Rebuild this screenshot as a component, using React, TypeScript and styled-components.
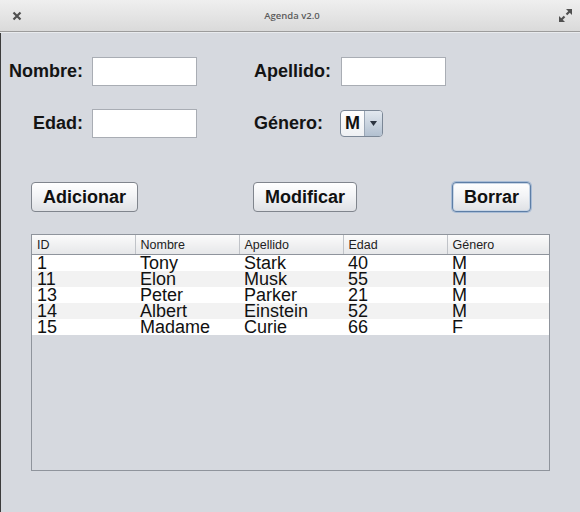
import styled, { createGlobalStyle } from "styled-components";

type Person = {
  id: number;
  nombre: string;
  apellido: string;
  edad: number;
  genero: string;
};

const people: Person[] = [
  { id: 1, nombre: "Tony", apellido: "Stark", edad: 40, genero: "M" },
  { id: 11, nombre: "Elon", apellido: "Musk", edad: 55, genero: "M" },
  { id: 13, nombre: "Peter", apellido: "Parker", edad: 21, genero: "M" },
  { id: 14, nombre: "Albert", apellido: "Einstein", edad: 52, genero: "M" },
  { id: 15, nombre: "Madame", apellido: "Curie", edad: 66, genero: "F" },
];

const columns = ["ID", "Nombre", "Apellido", "Edad", "Género"];
const colWidths = [103, 104, 104, 104];

const App = () => {
  return (
    <Window>
      <GlobalStyle />
      <TitleBar>
        <TitleIcon aria-label="close">
          <svg width="10" height="10" viewBox="0 0 10 10">
            <path d="M1.5 1.5 L8.5 8.5 M8.5 1.5 L1.5 8.5" stroke="#505050" strokeWidth="2.2" />
          </svg>
        </TitleIcon>
        <Title>Agenda v2.0</Title>
        <TitleIcon aria-label="maximize">
          <svg width="15" height="15" viewBox="0 0 15 15">
            <path d="M8 1 H14 V7 Z" fill="#505050" />
            <path d="M12.5 2.5 L8.5 6.5" stroke="#505050" strokeWidth="2.2" />
            <path d="M1 8 V14 H7 Z" fill="#505050" />
            <path d="M2.5 12.5 L6.5 8.5" stroke="#505050" strokeWidth="2.2" />
          </svg>
        </TitleIcon>
      </TitleBar>

      <Body>
        <Form>
          <Label>Nombre:</Label>
          <TextField />
          <Label $left>Apellido:</Label>
          <TextField />

          <Label>Edad:</Label>
          <TextField />
          <Label $left>Género:</Label>
          <Combo>
            <ComboValue>M</ComboValue>
            <ComboArrow>
              <svg width="7" height="5" viewBox="0 0 7 5">
                <path d="M0 0 H7 L3.5 5 Z" fill="#2b3440" />
              </svg>
            </ComboArrow>
          </Combo>
        </Form>

        <Actions>
          <Button>Adicionar</Button>
          <Button>Modificar</Button>
          <Button $focused>Borrar</Button>
        </Actions>

        <TableFrame>
          <Table>
            <colgroup>
              {colWidths.map((w, i) => (
                <col key={i} style={{ width: w }} />
              ))}
              <col />
            </colgroup>
            <thead>
              <tr>
                {columns.map((c) => (
                  <HeadCell key={c}>{c}</HeadCell>
                ))}
              </tr>
            </thead>
            <tbody>
              {people.map((p, idx) => (
                <Row key={p.id} $alt={idx % 2 === 1}>
                  <Cell>{p.id}</Cell>
                  <Cell>{p.nombre}</Cell>
                  <Cell>{p.apellido}</Cell>
                  <Cell>{p.edad}</Cell>
                  <Cell>{p.genero}</Cell>
                </Row>
              ))}
            </tbody>
          </Table>
        </TableFrame>
      </Body>
    </Window>
  );
};

export default App;

const GlobalStyle = createGlobalStyle`
  html, body {
    margin: 0;
    padding: 0;
    background: #d6d9df;
  }
  body {
    font-family: "Liberation Sans", Arial, sans-serif;
    color: #111;
  }
`;

const Window = styled.div`
  width: 580px;
  height: 512px;
  display: flex;
  flex-direction: column;
  background: #d6d9df;
  overflow: hidden;
`;

const TitleBar = styled.div`
  height: 31px;
  flex-shrink: 0;
  display: flex;
  align-items: center;
  justify-content: space-between;
  padding: 0 7px 0 9px;
  background: linear-gradient(#efefef, #dadada);
  border-bottom: 1px solid #9c9c9c;
  box-shadow: 0 1px 0 #e9ebee;
`;

const Title = styled.div`
  font-family: "Open Sans", "DejaVu Sans", sans-serif;
  font-size: 9.5px;
  font-weight: 600;
  color: #5c5c5c;
  margin-left: 2px;
`;

const TitleIcon = styled.div`
  width: 15px;
  height: 15px;
  display: flex;
  align-items: center;
  justify-content: center;
`;

const Body = styled.div`
  flex: 1;
  display: flex;
  flex-direction: column;
  padding-top: 24px;
  border-left: 1px solid #3c3c3c;
  margin-top: 1px;
`;

const Form = styled.div`
  display: grid;
  grid-template-columns: 85px 162px 87px auto;
  grid-auto-rows: 29px;
  row-gap: 23px;
  padding-left: 6px;
  align-items: center;
`;

const Label = styled.label<{ $left?: boolean }>`
  font-size: 18px;
  font-weight: bold;
  color: #141414;
  text-align: ${(p) => (p.$left ? "left" : "right")};
  padding-right: ${(p) => (p.$left ? "0" : "9px")};
`;

const TextField = styled.div`
  width: 105px;
  height: 29px;
  box-sizing: border-box;
  background: #fff;
  border: 1px solid #a9adb4;
`;

const Combo = styled.div`
  width: 43px;
  height: 27px;
  margin-left: -1px;
  box-sizing: border-box;
  display: flex;
  border: 1px solid #7b8796;
  border-radius: 4px;
  overflow: hidden;
  background: linear-gradient(#ffffff, #eef0f3);
`;

const ComboValue = styled.div`
  flex: 1;
  display: flex;
  align-items: center;
  padding-left: 4px;
  font-size: 18px;
  font-weight: bold;
  color: #111;
`;

const ComboArrow = styled.div`
  width: 17px;
  display: flex;
  align-items: center;
  justify-content: center;
  border-left: 1px solid #9aa6b5;
  background: linear-gradient(#e2e8ef, #b2c0d0);
`;

const Actions = styled.div`
  display: grid;
  grid-template-columns: 222px 199px auto;
  margin-top: 44px;
  padding-left: 30px;
  justify-items: start;
`;

const Button = styled.button<{ $focused?: boolean }>`
  height: 30px;
  padding: 0 11px;
  font-family: "Liberation Sans", Arial, sans-serif;
  font-size: 18px;
  font-weight: bold;
  color: #111;
  background: linear-gradient(#ffffff, #f3f4f6 45%, #dfe1e5);
  border: 1px solid ${(p) => (p.$focused ? "#5d7ea6" : "#80858d")};
  border-radius: 4px;
  box-shadow: ${(p) => (p.$focused ? "0 0 0 1px #a8bcd6, inset 0 0 0 1px #c9d6e6" : "none")};
  cursor: pointer;
`;

const TableFrame = styled.div`
  margin: 22px 0 0 30px;
  width: 519px;
  height: 237px;
  box-sizing: border-box;
  border: 1px solid #8f949c;
  background: #d6d9df;
`;

const Table = styled.table`
  width: 100%;
  table-layout: fixed;
  border-collapse: collapse;
`;

const HeadCell = styled.th`
  height: 19px;
  padding: 0 0 0 5px;
  text-align: left;
  font-size: 12.5px;
  font-weight: normal;
  color: #222;
  background: linear-gradient(#fbfbfb, #e6e7e9);
  border-right: 1px solid #c0c3c8;
  border-bottom: 1px solid #8f949c;

  &:last-child {
    border-right: none;
  }
`;

const Row = styled.tr<{ $alt: boolean }>`
  background: ${(p) => (p.$alt ? "#f2f2f2" : "#ffffff")};
`;

const Cell = styled.td`
  height: 16px;
  padding: 0 0 0 5px;
  font-size: 18px;
  line-height: 16px;
  color: #111;
  white-space: nowrap;
`;
